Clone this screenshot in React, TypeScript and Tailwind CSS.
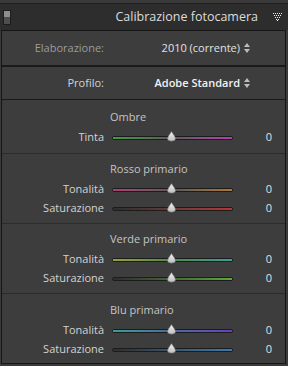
import React from "react";

interface SliderRow {
  label: string;
  track: string;
}

interface Section {
  title: string;
  height: string;
  pad: string;
  rows: SliderRow[];
}

const sections: Section[] = [
  {
    title: "Ombre",
    height: "h-[54px]",
    pad: "pt-[9px]",
    rows: [
      { label: "Tinta", track: "bg-linear-to-r from-[#3f9a3f] via-[#5a5a5a] to-[#b03cb0]" },
    ],
  },
  {
    title: "Rosso primario",
    height: "h-[70px]",
    pad: "pt-[7px]",
    rows: [
      { label: "Tonalità", track: "bg-linear-to-r from-[#b03a78] via-[#5a5a5a] to-[#b0762e]" },
      { label: "Saturazione", track: "bg-linear-to-r from-[#2e2e2e] via-[#6a3a3a] to-[#b83434]" },
    ],
  },
  {
    title: "Verde primario",
    height: "h-[70px]",
    pad: "pt-[7px]",
    rows: [
      { label: "Tonalità", track: "bg-linear-to-r from-[#98a032] via-[#4f8a4a] to-[#34a09a]" },
      { label: "Saturazione", track: "bg-linear-to-r from-[#2e2e2e] via-[#466a34] to-[#5aa83a]" },
    ],
  },
  {
    title: "Blu primario",
    height: "h-[69px]",
    pad: "pt-[8px]",
    rows: [
      { label: "Tonalità", track: "bg-linear-to-r from-[#34a09a] via-[#4a6a9a] to-[#6a3cc0]" },
      { label: "Saturazione", track: "bg-linear-to-r from-[#2e2e2e] via-[#3a566e] to-[#3a7ab0]" },
    ],
  },
];

const Arrows = () => (
  <svg width="6" height="10" viewBox="0 0 6 10" className="ml-[4px]">
    <path d="M3 0 L6 4 L0 4 Z" fill="#bdbdbd" />
    <path d="M0 6 L6 6 L3 10 Z" fill="#bdbdbd" />
  </svg>
);

const Thumb = () => (
  <svg
    width="11"
    height="11"
    viewBox="0 0 11 11"
    className="absolute left-[54px] top-[3px]"
  >
    <defs>
      <linearGradient id="th" x1="0" y1="0" x2="0" y2="1">
        <stop offset="0" stopColor="#f2f2f2" />
        <stop offset="1" stopColor="#bdbdbd" />
      </linearGradient>
    </defs>
    <path
      d="M5.5 0.5 L8.6 5 Q10.4 8 8.5 9.5 Q5.5 10.8 2.5 9.5 Q0.6 8 2.4 5 Z"
      fill="url(#th)"
      stroke="#6a6a6a"
      strokeWidth="0.6"
    />
  </svg>
);

const Slider = ({ label, track }: SliderRow) => (
  <div className="flex h-[19px] items-center">
    <div className="w-[102px] text-right text-[11px] text-[#d2d2d2]">{label}</div>
    <div className="relative ml-[8px] flex h-[19px] w-[121px] items-center">
      <div className="h-[4px] w-full rounded-[2px] border border-[#1c1c1c] bg-[#1c1c1c]">
        <div className={"h-[2px] w-full " + track} />
      </div>
      <Thumb />
    </div>
    <div className="ml-auto w-[32px] text-center text-[11px] text-[#dde0e4]">0</div>
  </div>
);

const App = () => {
  return (
    <div
      className="h-[366px] w-[288px] overflow-hidden bg-[#3a3a3a]"
      style={{ fontFamily: '"Open Sans", "Noto Sans", sans-serif' }}
    >
      <div className="mt-[3px] flex h-[27px] items-center border-t border-[#1e1e1e] bg-[#2d2d2d]">
        <div className="ml-[3px] flex h-[15px] w-[8px] flex-col border border-[#1e1e1e]">
          <div className="h-1/2 bg-[#8e8e8e]" />
          <div className="h-1/2 bg-[#4e4e4e]" />
        </div>
        <div className="ml-auto text-[12.5px] text-[#dcdcdc]">Calibrazione fotocamera</div>
        <svg width="10" height="8" viewBox="0 0 10 8" className="ml-[15px] mr-[5px]">
          <g fill="#f0f0f0">
            <rect x="0" y="0" width="1" height="1" />
            <rect x="2" y="0" width="1" height="1" />
            <rect x="4" y="0" width="1" height="1" />
            <rect x="6" y="0" width="1" height="1" />
            <rect x="8" y="0" width="1" height="1" />
            <rect x="1" y="2" width="1" height="1" />
            <rect x="3" y="2" width="1" height="1" />
            <rect x="5" y="2" width="1" height="1" />
            <rect x="7" y="2" width="1" height="1" />
            <rect x="2" y="4" width="1" height="1" />
            <rect x="4" y="4" width="1" height="1" />
            <rect x="6" y="4" width="1" height="1" />
            <rect x="3" y="6" width="1" height="1" />
            <rect x="5" y="6" width="1" height="1" />
            <rect x="4" y="7" width="1" height="1" />
          </g>
        </svg>
      </div>
      <div className="ml-[1px] w-[285px] border border-[#161616] bg-[#3d3d3d]">
        <div className="flex h-[36px] items-center border-b-2 border-[#1a1a1a] text-[11px]">
          <div className="w-[102px] text-right text-[#9c9c9c]">Elaborazione:</div>
          <div className="ml-auto mr-[35px] flex items-center text-[#e2e2e2]">
            2010 (corrente)
            <Arrows />
          </div>
        </div>
        <div className="flex h-[33px] items-center border-b border-[#1a1a1a] text-[11px]">
          <div className="w-[102px] text-right text-[#d4d4d4]">Profilo:</div>
          <div className="ml-auto mr-[35px] flex items-center font-semibold text-[#f2f2f2]">
            Adobe Standard
            <Arrows />
          </div>
        </div>
        {sections.map((s, i) => (
          <div
            key={s.title}
            className={
              s.height +
              " " +
              s.pad +
              (i < sections.length - 1 ? " border-b border-[#2c2c2c]" : "")
            }
          >
            <div className="mb-[3px] h-[16px] pl-[108px] text-[11px] leading-[16px] text-[#c4c4c4]">
              {s.title}
            </div>
            {s.rows.map((r) => (
              <Slider key={r.label} label={r.label} track={r.track} />
            ))}
          </div>
        ))}
      </div>
    </div>
  );
};

export default App;
